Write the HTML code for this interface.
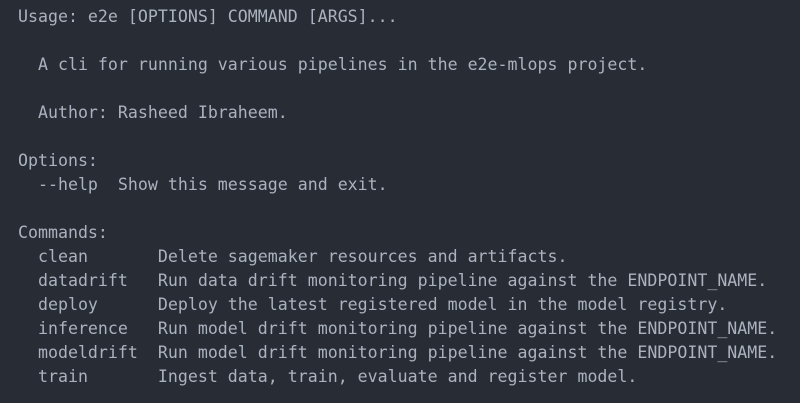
<!DOCTYPE html>
<html><head><style>
html,body{margin:0;padding:0;background:#282c34;width:800px;height:403px;overflow:hidden}
pre{margin:0;position:absolute;left:18px;top:5px;font-family:"DejaVu Sans Mono","Liberation Mono",monospace;font-size:16.6px;line-height:24px;color:#abb2bf}
</style></head><body>
<pre>Usage: e2e [OPTIONS] COMMAND [ARGS]...

  A cli for running various pipelines in the e2e-mlops project.

  Author: Rasheed Ibraheem.

Options:
  --help  Show this message and exit.

Commands:
  clean       Delete sagemaker resources and artifacts.
  datadrift   Run data drift monitoring pipeline against the ENDPOINT_NAME.
  deploy      Deploy the latest registered model in the model registry.
  inference   Run model drift monitoring pipeline against the ENDPOINT_NAME.
  modeldrift  Run model drift monitoring pipeline against the ENDPOINT_NAME.
  train       Ingest data, train, evaluate and register model.</pre>
</body></html>
